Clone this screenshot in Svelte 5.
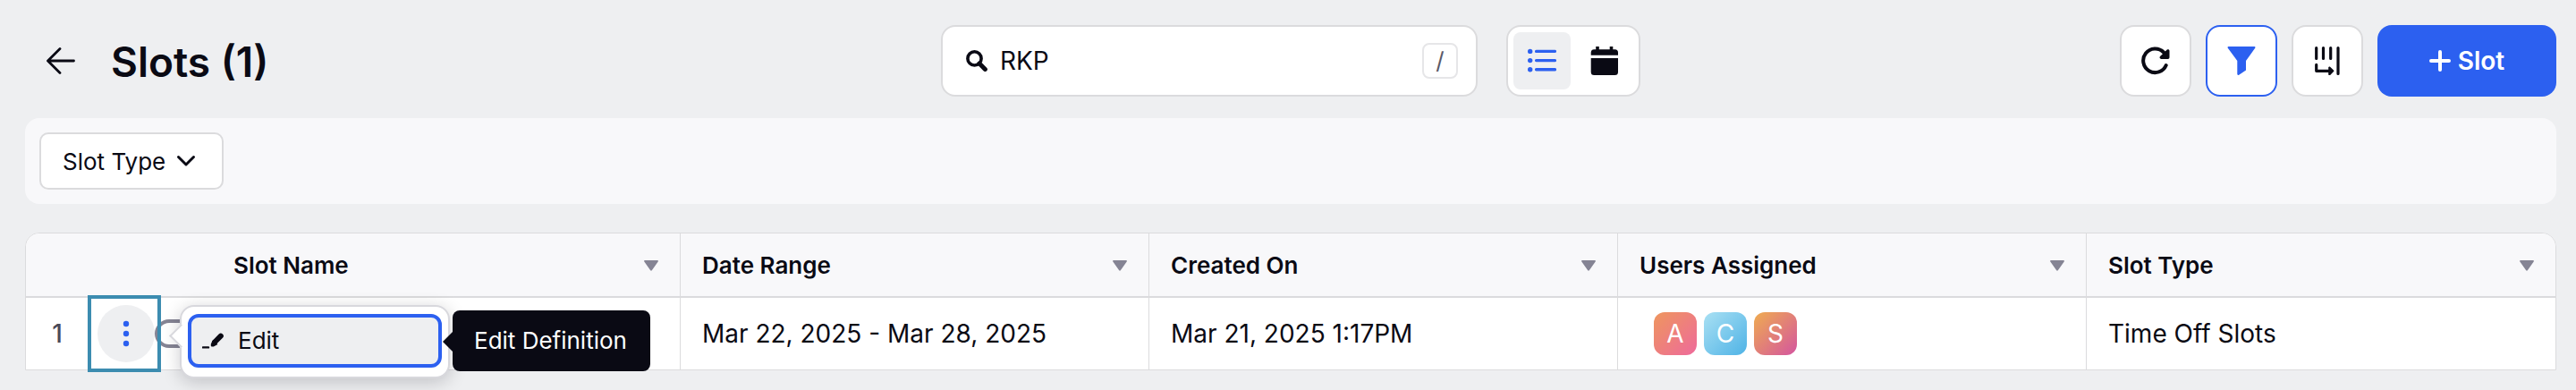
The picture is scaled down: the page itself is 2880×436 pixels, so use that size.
<script lang="ts">
	type User = { initial: string; from: string; to: string };

	const columns = ['Slot Name', 'Date Range', 'Created On', 'Users Assigned', 'Slot Type'];

	const users: User[] = [
		{ initial: 'A', from: '#ee965e', to: '#ee6a9b' },
		{ initial: 'C', from: '#a9e0f3', to: '#4fb3e6' },
		{ initial: 'S', from: '#efac50', to: '#d4559f' }
	];

	const rows = [
		{
			range: 'Mar 22, 2025 - Mar 28, 2025',
			created: 'Mar 21, 2025 1:17PM',
			users,
			type: 'Time Off Slots'
		}
	];

	let query = $state('RKP');
	let view = $state('list');
	let showFilters = $state(true);
	let openRow = $state(0);
</script>

<div class="page">
	<header class="topbar">
		<div class="heading">
			<button class="back" aria-label="Back">
				<svg viewBox="0 0 32 32">
					<path d="M30.500 16H2M15 2.500 1.500 16 15 29.500" fill="none" stroke="currentColor" stroke-width="2.800" stroke-linecap="round" stroke-linejoin="round" />
				</svg>
			</button>
			<h1>Slots ({rows.length})</h1>
		</div>

		<div class="tools">
			<label class="search">
				<svg viewBox="0 0 24 24" aria-hidden="true">
					<circle cx="9.5" cy="9.4" r="7.6" fill="none" stroke="currentColor" stroke-width="3.6" />
					<path d="m15 15 6.400 6.400" stroke="currentColor" stroke-width="5" stroke-linecap="round" />
				</svg>
				<input type="text" aria-label="Search slots" bind:value={query} />
				<kbd>/</kbd>
			</label>

			<div class="views">
				<button class:active={view === 'list'} aria-label="List view" onclick={() => (view = 'list')}>
					<svg viewBox="0 0 32 32">
						<g fill="currentColor">
							<circle cx="2.7" cy="5.4" r="2.7" />
							<circle cx="2.7" cy="15.6" r="2.7" />
							<circle cx="2.7" cy="25.8" r="2.7" />
						</g>
						<path d="M9.600 5.400h20.800M9.600 15.600h20.800M9.600 25.800h20.800" stroke="currentColor" stroke-width="3.4" stroke-linecap="round" />
					</svg>
				</button>
				<button class:active={view === 'calendar'} aria-label="Calendar view" onclick={() => (view = 'calendar')}>
					<svg viewBox="0 0 32 32" fill="currentColor">
						<path d="M6.200 0h3.600v3.200h11.900V0h3.600v3.200H27.500a3.500 3.500 0 0 1 3.500 3.500V9.700H.700V6.700a3.500 3.500 0 0 1 3.500-3.500h2z" />
						<path d="M.700 13H31v15.500a3.500 3.500 0 0 1-3.500 3.500H4.200a3.500 3.500 0 0 1-3.500-3.500z" />
					</svg>
				</button>
			</div>
		</div>

		<div class="actions">
			<button class="square" aria-label="Refresh">
				<svg viewBox="0 0 32 32">
					<path d="M27.700 21A13.300 13.300 0 1 1 25 6.500" fill="none" stroke="currentColor" stroke-width="4" stroke-linecap="round" />
					<path d="M31.500 4.800v7.400a1.700 1.700 0 0 1-1.700 1.700h-7.600c-1.600 0-2.200-1.700-1.200-2.800l7.800-7.500c1-.900 2.700-.300 2.700 1.200z" fill="currentColor" />
				</svg>
			</button>
			<button class="square" class:on={showFilters} aria-label="Toggle filters" onclick={() => (showFilters = !showFilters)}>
				<svg viewBox="0 0 32 32">
					<path d="M1.500 0h29c1 0 1.200 1 .700 1.800L21 16v10.500L13.200 31.700c-.900.600-1.900.200-1.900-.900V16L.800 1.800C.300 1 .500 0 1.500 0z" fill="currentColor" />
				</svg>
			</button>
			<button class="square" aria-label="Arrange columns">
				<svg viewBox="0 0 32 32">
					<g fill="none" stroke="currentColor" stroke-width="3.2" stroke-linecap="round" stroke-linejoin="round">
						<path d="M3.700 1.600v11.800M11.500 1.600v11.800M19.700 1.600v11.800M28 1.600v28.800" />
						<path d="M3.700 20.400v6.900H18" />
					</g>
					<path d="m17.200 23.200 0 8.200c.400.900 1.500.900 2.200.300l3.600-3.600c.600-.500.600-1.100 0-1.600l-3.600-3.600c-.700-.600-1.800-.600-2.200.300z" fill="currentColor" />
				</svg>
			</button>
			<button class="add">
				<svg viewBox="0 0 24 24" aria-hidden="true">
					<path d="M12 2v20M2 12h20" stroke="currentColor" stroke-width="4" stroke-linecap="round" />
				</svg>
				Slot
			</button>
		</div>
	</header>

	{#if showFilters}
		<section class="filters">
			<label class="filter">
				<select aria-label="Slot Type">
					<option>Slot Type</option>
				</select>
				<svg viewBox="0 0 24 24" aria-hidden="true">
					<path d="m3.500 7.500 8.500 8.500 8.500-8.500" fill="none" stroke="currentColor" stroke-width="3" stroke-linecap="round" stroke-linejoin="round" />
				</svg>
			</label>
		</section>
	{/if}

	<table>
		<colgroup>
			<col class="lead" />
			{#each columns as column (column)}
				<col />
			{/each}
		</colgroup>
		<thead>
			<tr>
				<td class="corner"></td>
				{#each columns as column (column)}
					<th scope="col">
						<div class="head">
							{column}
							<button class="sort" aria-label="{column} options">
								<svg viewBox="0 0 16 12"><path d="M1 0h14c.900 0 1.200.900.700 1.500l-6.900 9.800c-.400.500-1.200.500-1.600 0L.300 1.500C-.200.900.100 0 1 0z" fill="currentColor" /></svg>
							</button>
						</div>
					</th>
				{/each}
			</tr>
		</thead>
		<tbody>
			{#each rows as row, i (i)}
				<tr>
					<td class="controls">
						<div class="lead-cell">
							<span class="num">{i + 1}</span>
							<div class="menu-anchor">
								<button class="dots" aria-label="Row menu" onclick={() => (openRow = openRow === i ? -1 : i)}>
									<svg viewBox="0 0 32 32" fill="currentColor">
										<circle cx="16" cy="5" r="3.2" />
										<circle cx="16" cy="16" r="3.2" />
										<circle cx="16" cy="27" r="3.2" />
									</svg>
								</button>
								<input class="switch" type="checkbox" aria-label="Slot active" />
								{#if openRow === i}
									<span class="marker"></span>
									<div class="menu">
										<button class="item">
											<svg viewBox="0 0 24 24" aria-hidden="true">
												<path d="M1 19.400h6" stroke="currentColor" stroke-width="2.400" stroke-linecap="round" />
												<path d="m14 13.500 6.800-6.800" stroke="currentColor" stroke-width="6" stroke-linecap="round" />
												<path d="M12.300 10.800 9.800 15.400v2.200c0 .500.300.800.800.800h2.200l4.600-2.500z" fill="currentColor" />
											</svg>
											Edit
										</button>
										<div class="tip" role="tooltip">Edit Definition</div>
									</div>
								{/if}
							</div>
						</div>
					</td>
					<td></td>
					<td>{row.range}</td>
					<td>{row.created}</td>
					<td>
						<div class="users">
							{#each row.users as user (user.initial)}
								<span class="avatar" style="--from: {user.from}; --to: {user.to}">{user.initial}</span>
							{/each}
						</div>
					</td>
					<td>{row.type}</td>
				</tr>
			{/each}
		</tbody>
	</table>
</div>

<style>
	:global(body) {
		background: #eeeff1;
	}
	.page {
		--ink: #0a0a14;
		--line: #dbdbdd;
		--blue: #2c60f0;
		--grey: #858494;
		padding: 28px 22px 22px 28px;
		font-family: Inter, 'Liberation Sans', sans-serif;
		font-size: 28px;
		line-height: 32px;
		color: var(--ink);
	}
	.page * {
		box-sizing: border-box;
	}
	button,
	input,
	select {
		margin: 0;
		padding: 0;
		border: 0;
		background: none;
		font: inherit;
		color: inherit;
	}
	button {
		display: flex;
		align-items: center;
		justify-content: center;
		cursor: pointer;
	}
	svg {
		display: block;
		flex: none;
		width: 32px;
		height: 32px;
	}

	/* top bar */
	.topbar {
		display: grid;
		grid-template-columns: 1fr auto 1fr;
		align-items: center;
	}
	.heading {
		display: flex;
		align-items: center;
		gap: 16px;
	}
	.back {
		width: 80px;
		height: 80px;
	}
	h1 {
		margin: 0;
		padding-top: 2px;
		font-size: 46px;
		line-height: 56px;
		font-weight: 600;
	}
	.tools {
		display: flex;
		gap: 32px;
	}
	.search,
	.views,
	.square {
		height: 80px;
		border: 2px solid var(--line);
		border-radius: 16px;
		background: #fff;
	}
	.search {
		display: flex;
		align-items: center;
		gap: 14px;
		width: 600px;
		padding: 0 20px 0 26px;
	}
	.search svg,
	.add svg,
	.filter svg,
	.item svg {
		width: 24px;
		height: 24px;
	}
	.search input {
		flex: 1;
		min-width: 0;
		outline: none;
	}
	kbd {
		width: 40px;
		height: 40px;
		border: 2px solid #e6e6e8;
		border-radius: 8px;
		font-family: inherit;
		font-size: 26px;
		line-height: 36px;
		text-align: center;
		color: #5b5a68;
	}
	.views {
		display: flex;
		gap: 6px;
		padding: 6px;
	}
	.views button {
		width: 64px;
		height: 64px;
		border-radius: 8px;
	}
	.views .active {
		background: #eeeff1;
		color: var(--blue);
	}
	.actions {
		display: flex;
		justify-content: flex-end;
		gap: 16px;
	}
	.square {
		width: 80px;
	}
	.square.on {
		border-color: var(--blue);
		color: var(--blue);
	}
	.add {
		gap: 8px;
		width: 200px;
		height: 80px;
		border-radius: 16px;
		background: var(--blue);
		color: #fff;
		font-weight: 600;
	}

	/* filter bar */
	.filters {
		display: flex;
		margin-top: 24px;
		padding: 16px;
		border-radius: 16px;
		background: #f8f8fa;
	}
	.filter {
		display: flex;
		align-items: center;
		gap: 10px;
		height: 64px;
		padding: 0 28px 0 24px;
		border: 2px solid var(--line);
		border-radius: 10px;
		background: #fff;
		font-size: 26px;
	}
	.filter select {
		appearance: none;
		padding-top: 2px;
		outline: none;
	}

	/* table */
	table {
		width: 100%;
		margin-top: 32px;
		table-layout: fixed;
		border: 1px solid var(--line);
		border-radius: 16px 16px 0 0;
		border-collapse: separate;
		border-spacing: 0;
		background: #fff;
	}
	.lead {
		width: 208px;
	}
	th,
	td {
		padding: 0 24px;
		border-right: 1px solid var(--line);
		text-align: left;
		white-space: nowrap;
	}
	thead th,
	thead td {
		height: 72px;
		padding-top: 2px;
		border-bottom: 2px solid var(--line);
		background: #f8f8fa;
		font-size: 26px;
		font-weight: 600;
	}
	tbody td {
		height: 80px;
	}
	.corner,
	.controls,
	th:last-child,
	td:last-child {
		border-right: 0;
	}
	.corner {
		border-top-left-radius: 15px;
	}
	th:last-child {
		border-top-right-radius: 15px;
	}
	.head {
		display: flex;
		align-items: center;
		justify-content: space-between;
	}
	.sort {
		color: var(--grey);
	}
	.sort svg {
		width: 16px;
		height: 12px;
	}
	.controls {
		padding: 0;
	}
	.lead-cell {
		display: flex;
		align-items: center;
		gap: 8px;
	}
	.num {
		width: 70px;
		margin-right: 2px;
		text-align: center;
		font-weight: 500;
		color: #4a4958;
	}
	.menu-anchor {
		position: relative;
		display: flex;
		align-items: center;
	}
	.dots {
		width: 64px;
		height: 64px;
		border-radius: 50%;
		background: #eeeff1;
		color: var(--blue);
	}
	.switch {
		appearance: none;
		flex: none;
		width: 56px;
		height: 32px;
		border: 4px solid var(--grey);
		border-radius: 16px;
	}
	.marker {
		position: absolute;
		top: -11px;
		left: -11px;
		width: 82px;
		height: 86px;
		border: 4px solid #3c8cb0;
	}

	/* row menu, opens to the right of the dots */
	.menu {
		position: absolute;
		z-index: 2;
		top: 0;
		left: 92px;
		width: 302px;
		padding: 8px 7px 10px;
		border: 2px solid #d8d8dd;
		border-radius: 16px;
		background: #fff;
		box-shadow: 0 4px 20px rgba(10, 10, 20, 0.2);
	}
	.menu::before {
		content: '';
		position: absolute;
		top: 23px;
		left: -10px;
		width: 17px;
		height: 17px;
		border: solid #d8d8dd;
		border-width: 0 0 2px 2px;
		background: #fff;
		transform: rotate(45deg);
	}
	.item {
		position: relative;
		justify-content: flex-start;
		gap: 16px;
		width: 100%;
		height: 60px;
		padding: 0 12px;
		border: 4px solid var(--blue);
		border-radius: 12px;
		background: #eeeff1;
		font-size: 26px;
	}
	.tip {
		position: absolute;
		top: 4px;
		left: 303px;
		padding: 18px 26px 18px 24px;
		border-radius: 8px;
		background: var(--ink);
		color: #fff;
		font-size: 26px;
	}
	.tip::before {
		content: '';
		position: absolute;
		top: 23px;
		left: -11px;
		border: solid transparent;
		border-width: 12px 12px 12px 0;
		border-right-color: var(--ink);
	}

	.users {
		display: flex;
		gap: 8px;
		padding: 0 16px;
	}
	.avatar {
		width: 48px;
		height: 48px;
		border-radius: 12px;
		background: linear-gradient(135deg, var(--from), var(--to));
		color: #fff;
		line-height: 48px;
		text-align: center;
	}
</style>
